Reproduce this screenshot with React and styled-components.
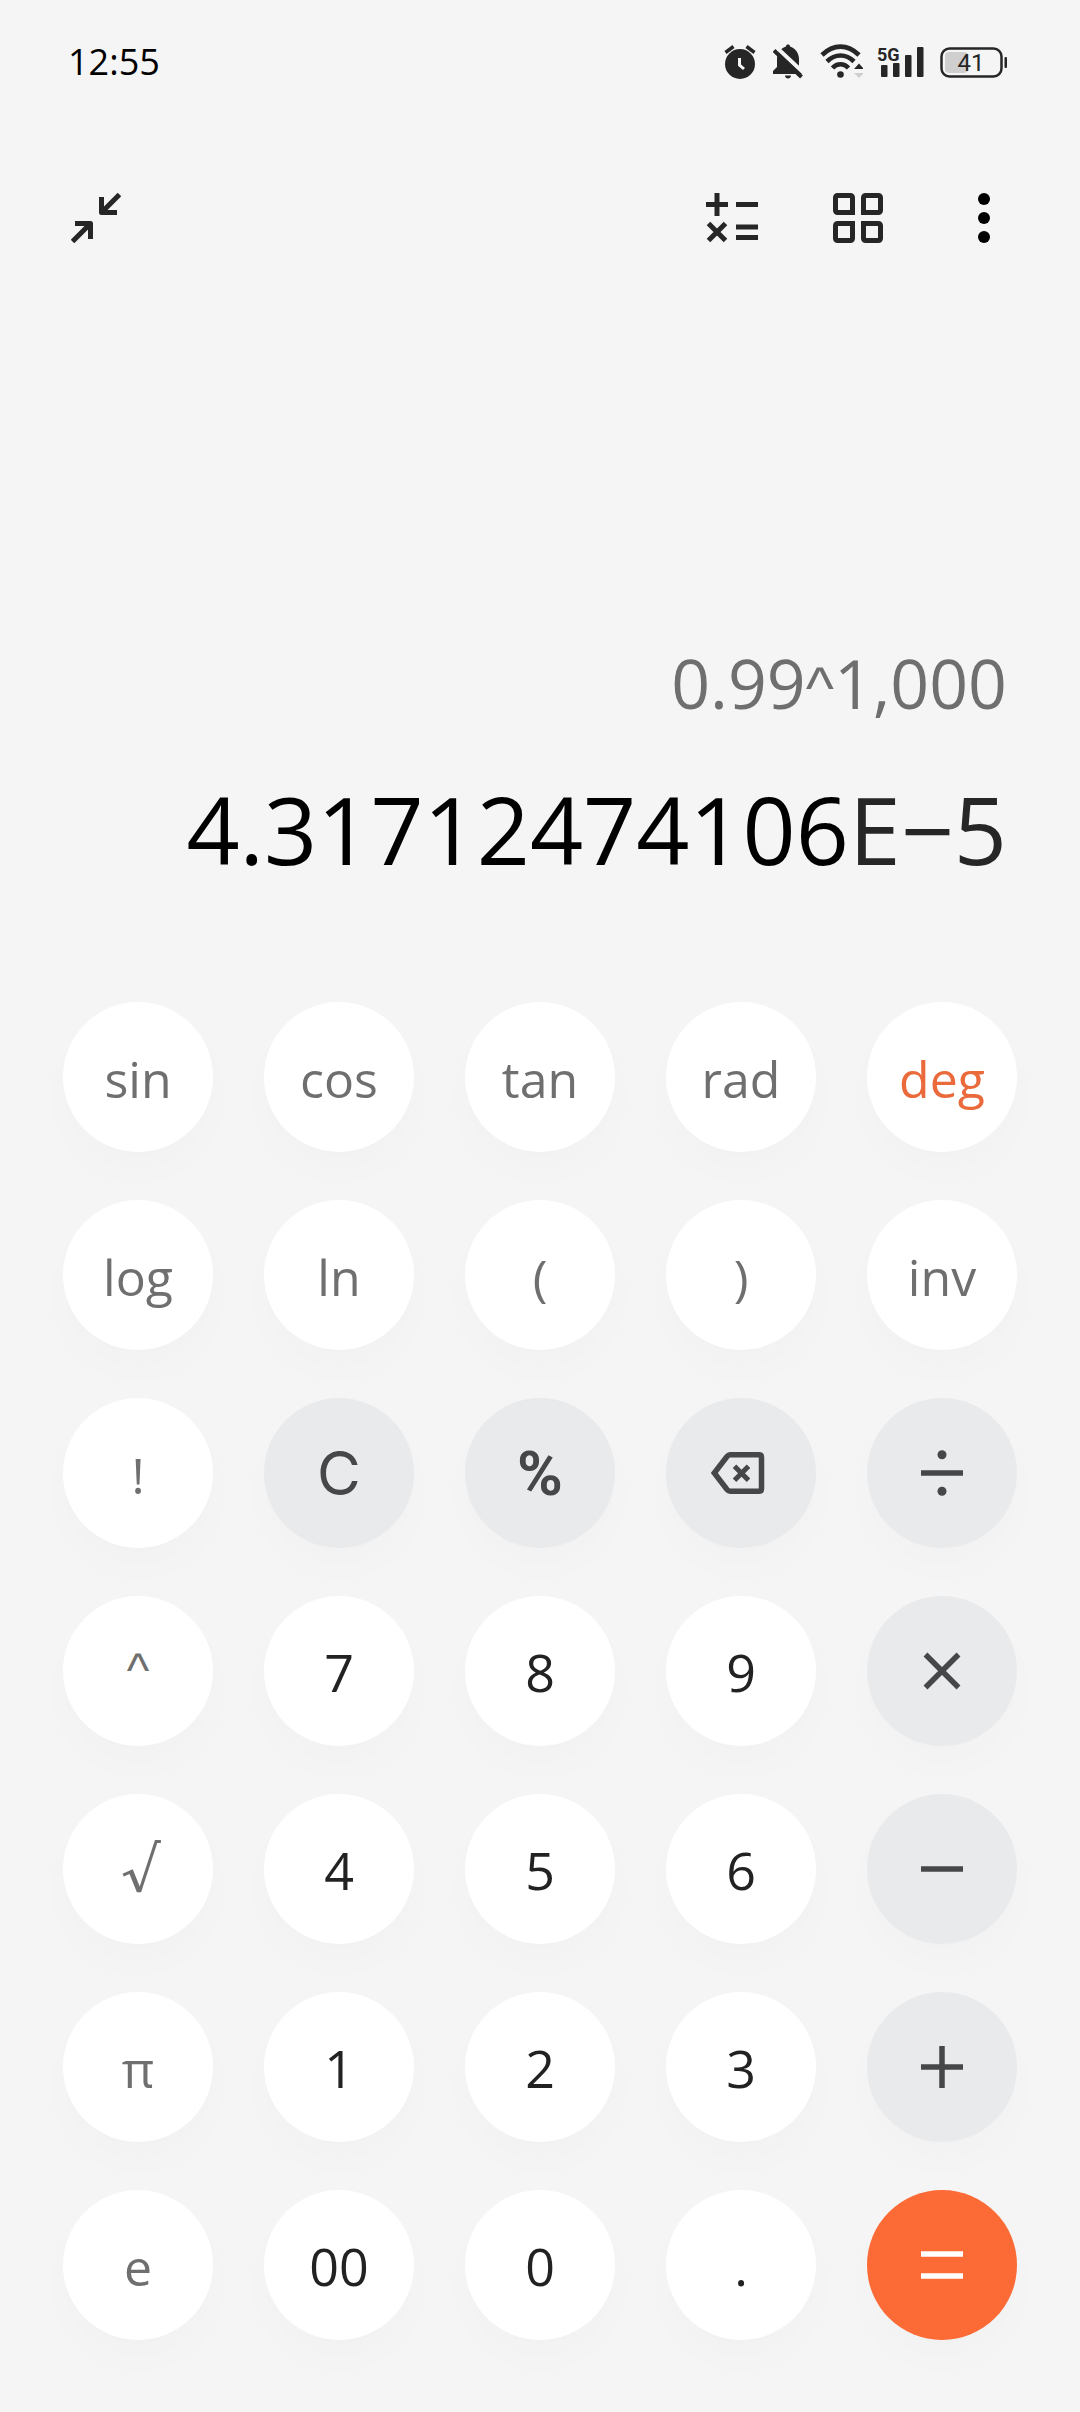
import React, { useState } from 'react';
import styled, { createGlobalStyle } from 'styled-components';

const GlobalStyle = createGlobalStyle`
  * {
    box-sizing: border-box;
  }

  body {
    margin: 0;
    background: #f5f5f5;
    font-family: 'Open Sans', 'Noto Sans', sans-serif;
  }

  button {
    margin: 0;
    padding: 0;
    border: none;
    background: none;
    font: inherit;
    cursor: pointer;
  }

  svg {
    display: block;
  }
`;

const Page = styled.div`
  display: flex;
  flex-direction: column;
  min-height: 100vh;
`;

const StatusBar = styled.div`
  display: flex;
  align-items: center;
  justify-content: space-between;
  height: 124px;
  padding: 0 73px 0 68px;
`;

const Clock = styled.time`
  font-size: 36px;
  font-weight: 500;
  line-height: 48px;
  color: #000;
`;

const StatusIcons = styled.div`
  display: flex;
  align-items: center;
  gap: 14px;
  color: #262626;
`;

const NetworkLabel = styled.text`
  font-family: Roboto, sans-serif;
  font-size: 18px;
  font-weight: 700;
`;

const BatteryLabel = styled.text`
  font-family: Roboto, sans-serif;
  font-size: 24px;
`;

const Toolbar = styled.header`
  display: flex;
  justify-content: space-between;
  padding: 68px 70px 0;
`;

const ToolGroup = styled.div`
  display: flex;
  gap: 74px;
`;

const ToolButton = styled.button`
  display: flex;
  align-items: center;
  justify-content: center;
  width: 52px;
  height: 52px;
  color: #262626;
`;

const Display = styled.main`
  flex: 1;
  display: flex;
  flex-direction: column;
  justify-content: flex-end;
  align-items: flex-end;
  gap: 34px;
  padding: 0 73px 109px;
`;

const Expression = styled.div`
  font-size: 68px;
  line-height: 96px;
  color: #6f6f6f;
`;

const Caret = styled.span`
  font-family: 'Liberation Sans', sans-serif;
  font-size: ${({ $size }) => $size}px;
  line-height: 1;
`;

const Result = styled.output`
  font-size: 93px;
  line-height: 128px;
  color: #000;
`;

const Exponent = styled.span`
  color: #262626;
`;

const Keypad = styled.div`
  display: grid;
  grid-template-columns: repeat(5, 1fr);
  gap: 48px 51px;
  padding: 0 63px 72px;
`;

const backgrounds = {
  fn: '#fff',
  digit: '#fff',
  op: '#e9eaec',
  equals: '#fc6a35',
};

const colors = {
  fn: '#6f6f6f',
  digit: '#222',
  op: '#454749',
  equals: '#fff',
};

const Key = styled.button`
  display: flex;
  align-items: center;
  justify-content: center;
  aspect-ratio: 1;
  border-radius: 50%;
  background: ${({ $kind }) => backgrounds[$kind]};
  color: ${({ $kind, $active }) => ($active ? '#ea6a3c' : colors[$kind])};
  font-size: ${({ $kind }) => ($kind === 'digit' ? 52 : 50)}px;
  box-shadow: 0 20px 40px rgba(0, 0, 0, 0.014);
`;

const KeyText = styled.span`
  padding-top: ${({ $kind }) => ($kind === 'digit' ? 0 : 4)}px;
`;

const Clear = styled.span`
  font-family: Inter, sans-serif;
  font-size: 60px;
`;

const Percent = styled.span`
  font-family: Roboto, sans-serif;
  font-size: 62px;
  font-weight: 700;
`;

const Root = styled.span`
  font-family: 'DejaVu Math TeX Gyre', 'Liberation Serif', serif;
  font-size: 60px;
  line-height: 1;
`;

function AlarmIcon() {
  return (
    <svg width="35" height="36" viewBox="0 0 35 36" aria-hidden="true">
      <circle cx="16" cy="20" r="15" fill="currentColor" />
      <path d="M1.5 8.5L9.5 2.5M22.5 2.5l8 6" stroke="currentColor" strokeWidth="3.5" />
      <path d="M15.5 14v7l4.500 4" fill="none" stroke="#f5f5f5" strokeWidth="3" />
    </svg>
  );
}

function BellOffIcon() {
  return (
    <svg width="33" height="36" viewBox="0 0 33 36" aria-hidden="true">
      <path
        d="M0 30v-3l4-4v-8c0-6 4-11 9-12.500C13 1 14 .5 15 .5s2 .5 2 2C22 4 26 9 26 15v8l4 4v3zM12 31.500h6c0 2-1.500 3-3 3s-3-1-3-3z"
        fill="currentColor"
      />
      <path d="M3.500 3.500L32 30" stroke="#f5f5f5" strokeWidth="4" />
      <path d="M1 6.500L28.500 33" stroke="currentColor" strokeWidth="4" />
    </svg>
  );
}

function WifiIcon() {
  return (
    <svg width="43" height="36" viewBox="0 0 43 36" aria-hidden="true">
      <g fill="none" stroke="currentColor" strokeWidth="4.600">
        <path d="M2 11Q10.500 2.600 20.500 2.600T39 11" />
        <path d="M7 17.500Q13 11.500 20.500 11.500T34 17.500" />
        <path d="M12.500 24Q16 20.300 20.500 20.300T28.500 24" />
      </g>
      <circle cx="20.500" cy="30.500" r="3.300" fill="currentColor" />
      <path d="M34 25l5-5.500 5 5.500z" fill="currentColor" />
      <path d="M34 29h10l-5 5z" fill="#cfcfcf" />
    </svg>
  );
}

function SignalIcon() {
  return (
    <svg width="48" height="36" viewBox="0 0 48 36" fill="currentColor" role="img" aria-label="5G signal">
      <NetworkLabel x="0" y="17">5G</NetworkLabel>
      <rect x="4" y="21" width="6.500" height="12" rx="1" />
      <rect x="16" y="19" width="6.500" height="14" rx="1" />
      <rect x="28" y="11" width="6.500" height="22" rx="1" />
      <rect x="40" y="3" width="6.500" height="30" rx="1" />
    </svg>
  );
}

function BatteryIcon() {
  return (
    <svg width="68" height="36" viewBox="0 0 68 36" role="img" aria-label="Battery 41">
      <rect x="6" y="8" width="23" height="21" rx="4" fill="#cfcfcf" />
      <rect x="2.500" y="4.500" width="60" height="28" rx="8" fill="none" stroke="currentColor" strokeWidth="2.500" />
      <rect x="65.500" y="13" width="2.500" height="11" rx="1" fill="currentColor" />
      <BatteryLabel x="32" y="27" textAnchor="middle" fill="currentColor">41</BatteryLabel>
    </svg>
  );
}

function CollapseIcon() {
  return (
    <svg width="50" height="50" viewBox="0 0 50 50" fill="none" stroke="currentColor" strokeWidth="5" aria-hidden="true">
      <path d="M48.500 1.500L30.500 19.500M30.500 4v15.500H46" strokeLinejoin="round" />
      <path d="M1.500 48.500L19.500 30.500M4 30.500h15.500V46" strokeLinejoin="round" />
    </svg>
  );
}

function OperationsIcon() {
  return (
    <svg width="52" height="50" viewBox="0 0 52 50" fill="none" stroke="currentColor" strokeWidth="5" aria-hidden="true">
      <path d="M0 11.500h22M11 0v23M30 11.500h22M30 34h22M30 44.500h22" />
      <path d="M2.500 30.500l17 17M19.500 30.500l-17 17" />
    </svg>
  );
}

function GridIcon() {
  return (
    <svg width="50" height="50" viewBox="0 0 50 50" fill="none" stroke="currentColor" strokeWidth="5" aria-hidden="true">
      <path d="M19.500 19.500h-15a2 2 0 0 1-2-2v-13a2 2 0 0 1 2-2h13a2 2 0 0 1 2 2z" />
      <path d="M30.500 19.500v-15a2 2 0 0 1 2-2h13a2 2 0 0 1 2 2v13a2 2 0 0 1-2 2z" />
      <path d="M19.500 30.500v15a2 2 0 0 1-2 2h-13a2 2 0 0 1-2-2v-13a2 2 0 0 1 2-2z" />
      <path d="M30.500 30.500h15a2 2 0 0 1 2 2v13a2 2 0 0 1-2 2h-13a2 2 0 0 1-2-2z" />
    </svg>
  );
}

function MoreIcon() {
  return (
    <svg width="12" height="52" viewBox="0 0 12 52" fill="#000" aria-hidden="true">
      <circle cx="6" cy="7" r="6" />
      <circle cx="6" cy="26" r="6" />
      <circle cx="6" cy="45" r="6" />
    </svg>
  );
}

function BackspaceIcon() {
  return (
    <svg width="60" height="60" viewBox="0 0 60 60" fill="none" stroke="currentColor" aria-hidden="true">
      <path
        d="M3.300 30L16 13.500q1.500-1.800 3-1.800h29q2.500 0 2.500 2.500v31.600q0 2.500-2.500 2.500H19q-1.500 0-3-1.800z"
        strokeWidth="5.500"
      />
      <path d="M23.500 23.300l14 14M37.500 23.300l-14 14" strokeWidth="5" />
    </svg>
  );
}

const operatorPaths = {
  divide: 'M9 30h42',
  multiply: 'M13.500 13.500l33 33M46.500 13.500l-33 33',
  minus: 'M9 30h42',
  plus: 'M9 30h42M30 9v42',
  equals: 'M9 19h42M9 41h42',
};

function OperatorIcon({ name }) {
  return (
    <svg width="60" height="60" viewBox="0 0 60 60" aria-hidden="true">
      <path d={operatorPaths[name]} stroke="currentColor" strokeWidth="5.500" />
      {name === 'divide' && (
        <g fill="currentColor">
          <circle cx="30" cy="11.700" r="4.500" />
          <circle cx="30" cy="48.300" r="4.500" />
        </g>
      )}
    </svg>
  );
}

const textKey = (kind) => (text) => ({
  id: text,
  kind,
  content: <KeyText $kind={kind}>{text}</KeyText>,
});
const digit = textKey('digit');
const fn = textKey('fn');
const op = (name, kind = 'op') => ({ id: name, kind, label: name, content: <OperatorIcon name={name} /> });

const keys = [
  fn('sin'), fn('cos'), fn('tan'), fn('rad'), fn('deg'),
  fn('log'), fn('ln'), fn('('), fn(')'), fn('inv'),
  fn('!'),
  { id: 'clear', kind: 'op', content: <Clear>C</Clear> },
  { id: 'percent', kind: 'op', content: <Percent>%</Percent> },
  { id: 'backspace', kind: 'op', label: 'backspace', content: <BackspaceIcon /> },
  op('divide'),
  { id: 'power', kind: 'fn', content: <Caret $size={48}>^</Caret> },
  digit('7'), digit('8'), digit('9'), op('multiply'),
  { id: 'root', kind: 'fn', content: <Root>√</Root> },
  digit('4'), digit('5'), digit('6'), op('minus'),
  fn('π'), digit('1'), digit('2'), digit('3'), op('plus'),
  fn('e'), digit('00'), digit('0'), digit('.'), op('equals', 'equals'),
];

function App() {
  const [angleUnit, setAngleUnit] = useState('deg');

  const handleKey = (id) => {
    if (id === 'deg' || id === 'rad') {
      setAngleUnit(id);
    }
  };

  return (
    <Page>
      <GlobalStyle />
      <StatusBar>
        <Clock>12:55</Clock>
        <StatusIcons>
          <AlarmIcon />
          <BellOffIcon />
          <WifiIcon />
          <SignalIcon />
          <BatteryIcon />
        </StatusIcons>
      </StatusBar>
      <Toolbar>
        <ToolButton aria-label="Collapse"><CollapseIcon /></ToolButton>
        <ToolGroup>
          <ToolButton aria-label="Calculator"><OperationsIcon /></ToolButton>
          <ToolButton aria-label="Converters"><GridIcon /></ToolButton>
          <ToolButton aria-label="More options"><MoreIcon /></ToolButton>
        </ToolGroup>
      </Toolbar>
      <Display>
        <Expression>0.99<Caret $size={60}>^</Caret>1,000</Expression>
        <Result>4.31712474106<Exponent>E−5</Exponent></Result>
      </Display>
      <Keypad>
        {keys.map(({ id, kind, label, content }) => (
          <Key
            key={id}
            type="button"
            $kind={kind}
            $active={id === angleUnit}
            aria-label={label}
            onClick={() => handleKey(id)}
          >
            {content}
          </Key>
        ))}
      </Keypad>
    </Page>
  );
}

export default App;
